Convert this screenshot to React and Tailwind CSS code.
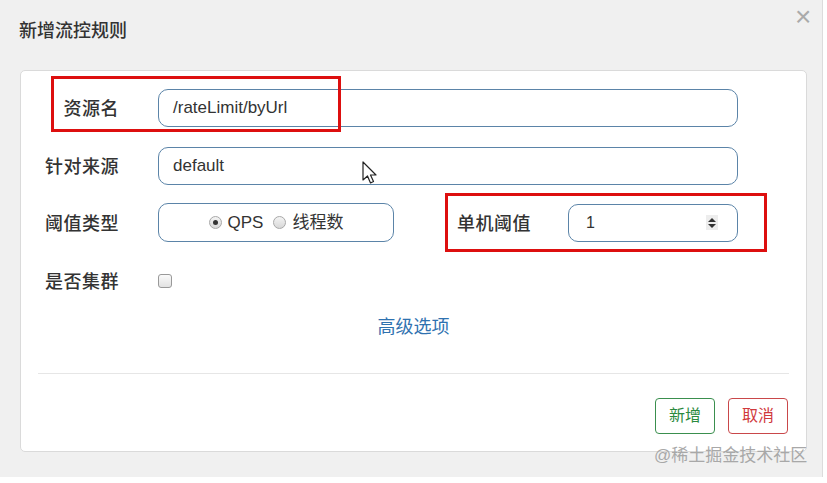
import React from "react";

const font = { fontFamily: '"Liberation Sans", "Noto Sans CJK SC", sans-serif' };

function Radio({ checked }) {
  return (
    <span className="inline-flex w-[13px] h-[13px] rounded-full border border-[#a8a8a8] bg-gradient-to-b from-[#f4f4f4] to-[#d8d8d8] items-center justify-center">
      {checked && <span className="w-[5px] h-[5px] rounded-full bg-[#333]" />}
    </span>
  );
}

function Label({ children }) {
  return (
    <div className="w-[98px] shrink-0 text-right text-[18px] font-medium text-[#333] tracking-[0.5px] pt-[3px]">
      {children}
    </div>
  );
}

function Cursor() {
  return (
    <svg className="absolute left-[362px] top-[161px]" width="18" height="26" viewBox="0 0 18 26">
      <path
        d="M1 1 L1 19 L5.5 15 L8.5 22 L11.5 20.5 L8.5 14 L14 14 Z"
        fill="#fff"
        stroke="#222"
        strokeWidth="1.2"
        strokeLinejoin="round"
      />
    </svg>
  );
}

export default function App() {
  return (
    <div className="w-[827px] h-[483px] bg-white relative overflow-hidden" style={font}>
      <div className="w-[823px] h-[477px] bg-[#f0f0f0] border-r border-[#dcdcdc] flex flex-col">
        <div className="h-[70px] pl-[19px] pt-[20px]">
          <h1 className="text-[18px] leading-[22px] font-medium text-[#333]">新增流控规则</h1>
        </div>
        <div className="absolute left-[795px] top-[4px] text-[#aaa] text-[28px] leading-[26px] font-light">×</div>

        <div className="ml-[20px] w-[787px] h-[382px] bg-white border border-[#dadada] rounded-[5px] relative flex flex-col">
          <div className="flex flex-col pt-[18px] gap-[20px]">
            <div className="flex items-center h-[38px]">
              <Label>资源名</Label>
              <div className="ml-[39px] w-[580px] h-[38px] border border-[#5b84a8] rounded-[10px] flex items-center px-[14px] text-[17px] text-[#333]">
                /rateLimit/byUrl
              </div>
            </div>
            <div className="flex items-center h-[38px]">
              <Label>针对来源</Label>
              <div className="ml-[39px] w-[580px] h-[38px] border border-[#5b84a8] rounded-[10px] flex items-center px-[14px] text-[17px] text-[#333]">
                default
              </div>
            </div>
            <div className="flex items-center h-[39px] -mt-[2px]">
              <Label>阈值类型</Label>
              <div className="ml-[39px] w-[236px] h-[39px] border border-[#5b84a8] rounded-[10px] flex items-center justify-center gap-[6px] text-[17px] text-[#333]">
                <Radio checked />
                <span className="mr-[4px]">QPS</span>
                <Radio />
                <span>线程数</span>
              </div>
              <div className="ml-[63px] text-[18px] font-medium text-[#333] tracking-[0.5px] pt-[3px]">单机阈值</div>
              <div className="ml-[37px] w-[170px] h-[38px] border border-[#5b84a8] rounded-[10px] flex items-center justify-between pl-[17px] pr-[19px] text-[16px] text-[#333]">
                <span>1</span>
                <span className="w-[12px] h-[15px] bg-[#ededed] flex flex-col items-center justify-center gap-[2px]">
                  <svg width="8" height="4" viewBox="0 0 8 4"><path d="M0 4 L4 0 L8 4 Z" fill="#333" /></svg>
                  <svg width="8" height="4" viewBox="0 0 8 4"><path d="M0 0 L4 4 L8 0 Z" fill="#333" /></svg>
                </span>
              </div>
            </div>
            <div className="flex items-center h-[38px]">
              <Label>是否集群</Label>
              <span className="ml-[39px] w-[14px] h-[14px] rounded-[3px] border border-[#999] bg-gradient-to-b from-[#fafafa] to-[#e2e2e2]" />
            </div>
          </div>

          <div className="mt-[14px] text-center text-[18px] text-[#2f72b0]">高级选项</div>

          <div className="mx-[17px] mt-[32px] border-t border-[#e6e6e6]" />

          <div className="flex justify-end gap-[13px] mr-[18px] mt-[24px]">
            <button className="w-[60px] h-[36px] border border-[#3a8f4e] rounded-[4px] text-[#2b8a3e] text-[16px]">新增</button>
            <button className="w-[60px] h-[36px] border border-[#c9474a] rounded-[4px] text-[#d0393c] text-[16px]">取消</button>
          </div>

          <div className="absolute left-[30px] top-[5px] w-[290px] h-[56px] border-[3px] border-[#dd0f0f]" />
          <div className="absolute left-[424px] top-[122px] w-[322px] h-[59px] border-[3px] border-[#dd0f0f]" />
        </div>
      </div>
      <Cursor />
      <div className="absolute left-[654px] top-[444px] text-[17px] leading-[24px] text-[#a8a8a8]">@稀土掘金技术社区</div>
    </div>
  );
}
